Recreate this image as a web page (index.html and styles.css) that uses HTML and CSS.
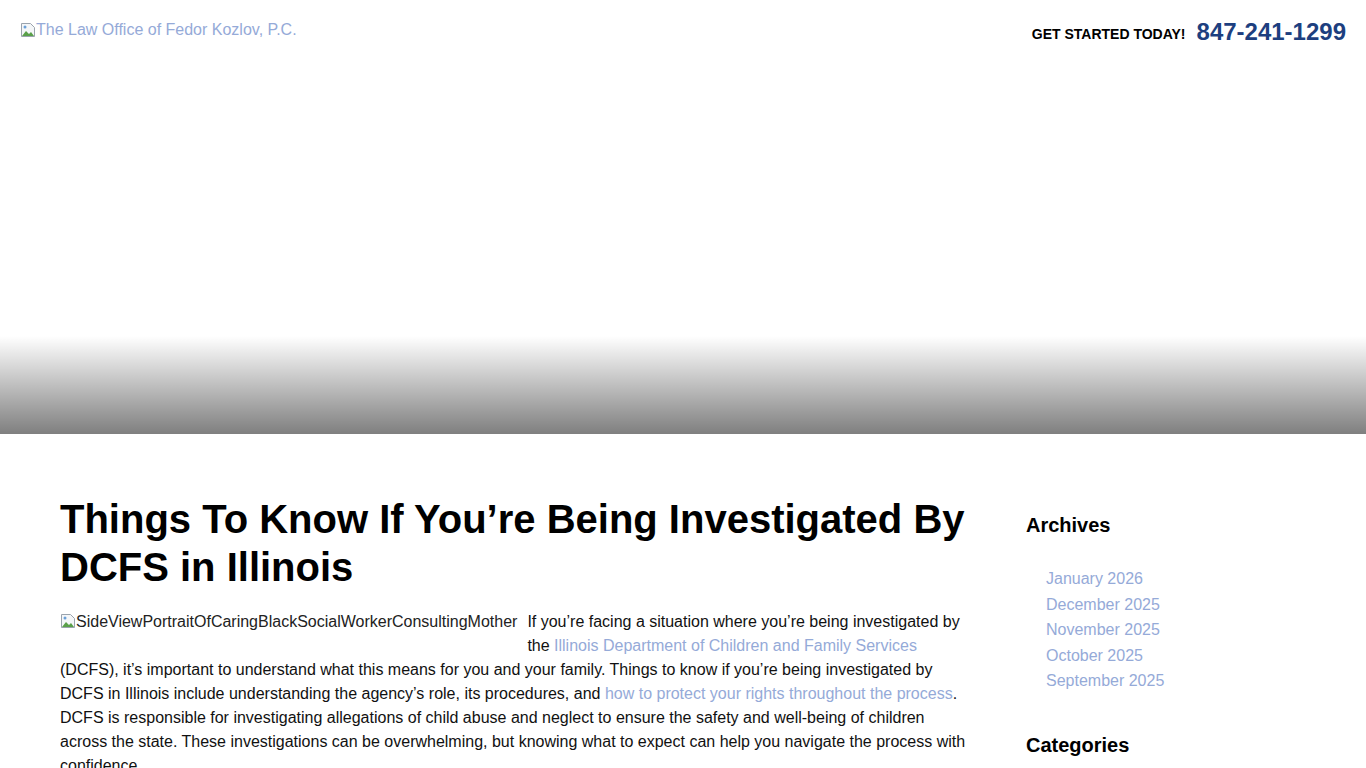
FILE: index.html
```html
<!DOCTYPE html>
<html lang="en">
<head>
<meta charset="utf-8">
<title>Things To Know If You're Being Investigated By DCFS in Illinois</title>
<link rel="stylesheet" href="styles.css">
</head>
<body>
<header class="hero">
  <div class="topbar">
    <a class="logo" href="#">
      <svg class="broken" width="16" height="16" viewBox="0 0 16 16"><path d="M1.5 1.5h9l4 4v9h-13z" fill="#f4f6f8" stroke="#9aa3ad"/><path d="M2 14l4-5 3 3 2-2 3 4z" fill="#5aa04a"/><circle cx="5" cy="5" r="1.5" fill="#6aa0d8"/></svg>The Law Office of Fedor Kozlov, P.C.
    </a>
    <div class="cta">
      <span class="cta-label">Get Started Today!</span>
      <a class="phone" href="#">847-241-1299</a>
    </div>
  </div>
  <div class="shade"></div>
</header>
<div class="page">
  <main class="post">
    <h1 class="post-title">Things To Know If You’re Being Investigated By DCFS in Illinois</h1>
    <p class="post-body"><span class="figure"><svg class="broken" width="16" height="16" viewBox="0 0 16 16"><path d="M1.5 1.5h9l4 4v9h-13z" fill="#f4f6f8" stroke="#9aa3ad"/><path d="M2 14l4-5 3 3 2-2 3 4z" fill="#5aa04a"/><circle cx="5" cy="5" r="1.5" fill="#6aa0d8"/></svg>SideViewPortraitOfCaringBlackSocialWorkerConsultingMother</span>If you’re facing a situation where you’re being investigated by the <a href="#">Illinois Department of Children and Family Services</a> (DCFS), it’s important to understand what this means for you and your family. Things to know if you’re being investigated by DCFS in Illinois include understanding the agency’s role, its procedures, and <a href="#">how to protect your rights throughout the process</a>. DCFS is responsible for investigating allegations of child abuse and neglect to ensure the safety and well-being of children across the state. These investigations can be overwhelming, but knowing what to expect can help you navigate the process with confidence.</p>
  </main>
  <aside class="sidebar">
    <section class="widget">
      <h2 class="widget-title">Archives</h2>
      <ul class="widget-list">
        <li><a href="#">January 2026</a></li>
        <li><a href="#">December 2025</a></li>
        <li><a href="#">November 2025</a></li>
        <li><a href="#">October 2025</a></li>
        <li><a href="#">September 2025</a></li>
      </ul>
    </section>
    <section class="widget">
      <h2 class="widget-title">Categories</h2>
    </section>
  </aside>
</div>
</body>
</html>
```

FILE: styles.css
```css
* { box-sizing: border-box; }
html, body { margin: 0; padding: 0; }
body {
  font-family: "Liberation Sans", Arial, sans-serif;
  color: #111;
  background: #fff;
  font-size: 16px;
  line-height: 24px;
}
a { color: #95aad8; text-decoration: none; }

.hero {
  height: 434px;
  display: flex;
  flex-direction: column;
  justify-content: space-between;
}
.topbar {
  display: flex;
  justify-content: space-between;
  align-items: flex-start;
  padding: 19px 20px 0 20px;
}
.logo {
  display: flex;
  align-items: center;
  font-size: 16px;
  line-height: 22px;
  color: #95aad8;
}
.broken { flex: none; vertical-align: -2px; }
.cta {
  display: flex;
  align-items: center;
  gap: 11px;
  margin-top: -1px;
}
.cta-label {
  text-transform: uppercase;
  font-weight: 700;
  font-size: 14px;
  color: #000;
  padding-top: 4px;
}
.phone {
  font-weight: 700;
  font-size: 24px;
  line-height: 28px;
  color: #1d3f7f;
}
.shade {
  height: 98px;
  background: linear-gradient(to bottom, rgba(0,0,0,0) 0%, rgba(0,0,0,0.5) 100%);
}

.page {
  display: flex;
  gap: 60px;
  padding: 61px 20px 0 60px;
}
.post { width: 906px; flex: none; }
.post-title {
  margin: 0 0 19px;
  font-size: 40px;
  line-height: 48px;
  font-weight: 700;
  color: #000;
}
.post-body { margin: 0; color: #111; }
.figure {
  float: left;
  height: 48px;
  margin-right: 10px;
  color: #222;
}
.sidebar { flex: 1; padding-top: 18px; }
.widget-title {
  margin: 0;
  font-size: 20px;
  line-height: 24px;
  font-weight: 700;
  color: #000;
}
.widget-list {
  list-style: none;
  margin: 29px 0 39px;
  padding: 0 0 0 20px;
}
.widget-list li { line-height: 25.5px; }
```
